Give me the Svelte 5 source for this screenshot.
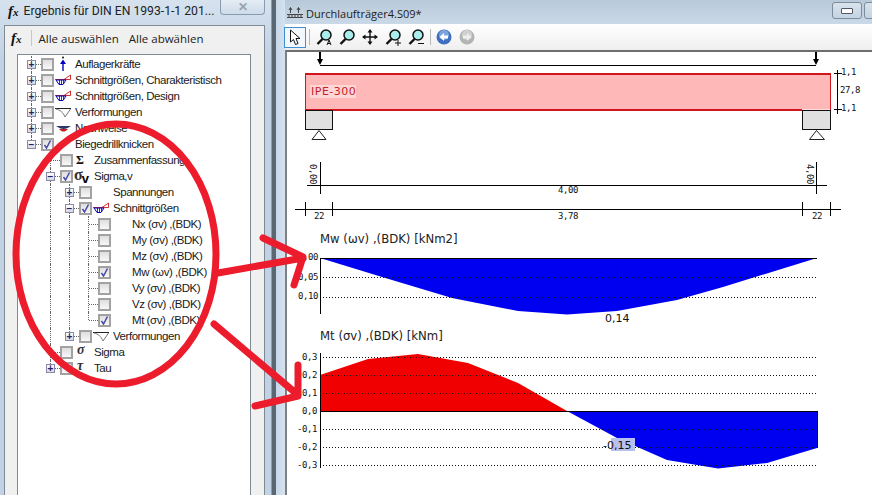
<script>
  const rows = [
    { level: 0, exp: '+', icon: 'force', text: 'Auflagerkräfte' },
    { level: 0, exp: '+', icon: 'moment', text: 'Schnittgrößen, Charakteristisch' },
    { level: 0, exp: '+', icon: 'moment', text: 'Schnittgrößen, Design' },
    { level: 0, exp: '+', icon: 'defl', text: 'Verformungen' },
    { level: 0, exp: '+', icon: 'bowl', text: 'Nachweise' },
    { level: 0, exp: '-', check: true, text: 'Biegedrillknicken' },
    { level: 1, icon: 'sum', text: 'Zusammenfassung' },
    { level: 1, exp: '-', check: true, icon: 'sigmav', text: 'Sigma,v' },
    { level: 2, exp: '+', text: 'Spannungen' },
    { level: 2, exp: '-', check: true, icon: 'moment', text: 'Schnittgrößen' },
    { level: 3, text: 'Nx (σv) ,(BDK)' },
    { level: 3, text: 'My (σv) ,(BDK)' },
    { level: 3, text: 'Mz (σv) ,(BDK)' },
    { level: 3, check: true, text: 'Mw (ωv) ,(BDK)' },
    { level: 3, text: 'Vy (σv) ,(BDK)' },
    { level: 3, text: 'Vz (σv) ,(BDK)' },
    { level: 3, check: true, text: 'Mt (σv) ,(BDK)' },
    { level: 2, exp: '+', icon: 'defl', text: 'Verformungen' },
    { level: 1, icon: 'sigma', text: 'Sigma' },
    { level: 1, exp: '+', icon: 'tau', text: 'Tau' }
  ];

  // true when a later sibling at this level still follows row i
  function continues(i, level) {
    for (let k = i + 1; k < rows.length; k++) {
      if (rows[k].level < level) return false;
      if (rows[k].level === level) return true;
    }
    return false;
  }

  const tools = ['zoomA', 'zoom', 'pan', 'zoomPlus', 'zoomMinus'];
  const mwGrid = [277, 297];
  const mtGrid = [357, 375, 393, 429, 447, 465];
  const mtLabels = [
    [360, '0,3'], [378, '0,2'], [396, '0,1'], [414, '0,0'],
    [432, '-0,1'], [450, '-0,2'], [468, '-0,3']
  ];
</script>

{#snippet magnifier(sign)}
  <svg class="tool" viewBox="0 0 16 18" width="16" height="18">
    <circle cx="10" cy="7" r="5" fill="#a8ecec" stroke="#111" stroke-width="1.5" />
    <path d="M6.5 11 L1.5 16" stroke="#111" stroke-width="2.4" />
    {#if sign === 'A'}<path d="M11 17 L13 12 L15 17 M12 15.5 H14" fill="none" stroke="#111" />{/if}
    {#if sign === '+'}<path d="M10 15 H16 M13 12 V18" stroke="#111" />{/if}
    {#if sign === '-'}<path d="M10 15.5 H16" stroke="#111" />{/if}
  </svg>
{/snippet}

{#snippet treeIcon(name)}
  {#if name === 'force'}
    <svg viewBox="0 0 17 16" width="17" height="16"><circle cx="8" cy="1.5" r="1" fill="#111" /><path d="M8 15 V5" stroke="#0000c8" stroke-width="1.4" /><path d="M5 8 L8 3.5 L11 8 Z" fill="#0000c8" /></svg>
  {:else if name === 'moment'}
    <svg viewBox="0 0 17 16" width="17" height="16"><path d="M0 7.500 H9 L15.500 3 V7.500 H9" fill="none" stroke="#d03030" /><path d="M1 8 H11 L8 12.500 H4 Z" fill="#fff" stroke="#0000b4" /><path d="M4.500 8 V12 M6.500 8 V12 M8.500 8 V12" stroke="#0000b4" stroke-width=".8" /></svg>
  {:else if name === 'defl'}
    <svg viewBox="0 0 17 16" width="17" height="16"><path d="M0 4.500 H16" stroke="#222" /><path d="M1 5 C5 6 8 8 10 13 L15.500 5" fill="none" stroke="#777" /></svg>
  {:else if name === 'bowl'}
    <svg viewBox="0 0 17 16" width="17" height="16"><path d="M1 6 H16 C13 8 11 9 8.500 9 C6 9 4 8 1 6 Z" fill="#2a3a68" /><path d="M4 9 H13 C11 11 10 11.500 8.500 11.500 C7 11.500 6 11 4 9 Z" fill="#c02020" /></svg>
  {:else if name === 'sum'}
    <span class="glyph sum">Σ</span>
  {:else if name === 'sigmav'}
    <span class="glyph sigv">σ<i>v</i></span>
  {:else if name === 'sigma'}
    <span class="glyph sig">σ</span>
  {:else if name === 'tau'}
    <span class="glyph sig">τ</span>
  {/if}
{/snippet}

<div class="desktop">
  <section class="dialog">
    <header class="dialog-title">
      <span class="fx">f<small>x</small></span>
      <span class="caption big">Ergebnis für DIN EN 1993-1-1 201...</span>
      <span class="close">✕</span>
    </header>
    <div class="panel">
      <div class="panel-tools">
        <span class="fx">f<small>x</small></span>
        <span class="sep"></span>
        <span>Alle auswählen</span>
        <span>Alle abwählen</span>
      </div>
      <ul class="tree">
        {#each rows as row, i}
          <li class="row">
            {#each Array(row.level) as _, col}
              <span class="cell" class:line={continues(i, col)}></span>
            {/each}
            <span class="cell conn" class:down={continues(i, row.level)}>
              {#if row.exp}<span class="exp">{row.exp === '+' ? '+' : '−'}</span>{/if}
            </span>
            <span class="cb">
              {#if row.check}
                <svg viewBox="0 0 9 9" width="9" height="9"><path d="M1.500 5 L3.500 8 L7.500 .5" fill="none" stroke="#4848a8" stroke-width="1.500" /></svg>
              {/if}
            </span>
            <span class="ic">{#if row.icon}{@render treeIcon(row.icon)}{/if}</span>
            <span class="label">{row.text}</span>
          </li>
        {/each}
      </ul>
    </div>
  </section>

  <section class="main">
    <div class="edge"></div>
    <div class="doc">
      <header class="doc-title">
        <svg viewBox="0 0 16 12" width="16" height="12">
          <path d="M0 7.500 H16 M0 10.500 H16 M2 7 V11 M5 7 V11 M8 7 V11 M11 7 V11 M14 7 V11 M3.500 6 V1 M11.500 6 V1" stroke="#444" fill="none" />
          <path d="M2 3 L3.500 .5 L5 3 M10 3 L11.500 .5 L13 3" stroke="#444" fill="none" />
        </svg>
        <span class="caption">Durchlaufträger4.S09*</span>
        <span class="winbtn"><i></i></span>
        <span class="winbtn next"></span>
      </header>
      <nav class="toolbar">
        <span class="pick">
          <svg viewBox="0 0 12 17" width="12" height="17"><path d="M1.500 1 V13 L4.500 10.500 L6.500 15.500 L9 14.500 L7 9.500 L11 9.500 Z" fill="#fff" stroke="#111" /></svg>
        </span>
        <span class="tsep"></span>
        {#each tools as t}
          {#if t === 'pan'}
            <svg class="tool" viewBox="0 0 16 16" width="16" height="16"><path d="M8 1 V15 M1 8 H15" stroke="#111" stroke-width="1.400" /><path d="M8 0 L5.500 3.500 H10.500 Z M8 16 L5.500 12.500 H10.500 Z M0 8 L3.500 5.500 V10.500 Z M16 8 L12.500 5.500 V10.500 Z" fill="#111" /></svg>
          {:else}
            {@render magnifier(t === 'zoomA' ? 'A' : t === 'zoomPlus' ? '+' : t === 'zoomMinus' ? '-' : '')}
          {/if}
        {/each}
        <span class="tsep second"></span>
        <svg class="nav" viewBox="0 0 16 16" width="16" height="16"><circle cx="8" cy="8" r="7.500" fill="#3f70c0" /><circle cx="8" cy="6" r="5" fill="#7fa6dc" /><path d="M3.500 8 L8 4 V6.500 H12 V9.500 H8 V12 Z" fill="#fff" /></svg>
        <svg class="nav" viewBox="0 0 16 16" width="16" height="16"><circle cx="8" cy="8" r="7.500" fill="#b4b4b4" /><circle cx="8" cy="6" r="5" fill="#d0d0d0" /><path d="M12.500 8 L8 4 V6.500 H4 V9.500 H8 V12 Z" fill="#eee" /></svg>
      </nav>
      <div class="canvas">
        <svg viewBox="287 52 585 443" width="585" height="443">
          <!-- loads -->
          <g class="ln">
            <path d="M320 65.500 H816" />
            <path d="M320 52 V62 M816 52 V62" stroke-width="2" />
          </g>
          <path d="M317 59 L320 65 L323 59 Z M813 59 L816 65 L819 59 Z" fill="#000" />

          <!-- beam -->
          <rect x="305.500" y="73.500" width="525" height="36" fill="#ffb8b8" />
          <path d="M305 73.500 H831 M305 110 H802" stroke="#d2141e" stroke-width="2" shape-rendering="crispEdges" />
          <path d="M305.500 73 V110 M830.500 73 V110" stroke="#d2141e" shape-rendering="crispEdges" />
          <rect x="305.500" y="110.500" width="27" height="19" fill="#e0e0e0" stroke="#111" shape-rendering="crispEdges" />
          <rect x="802.500" y="110.500" width="28" height="19" fill="#e0e0e0" stroke="#111" shape-rendering="crispEdges" />
          <path d="M319 130.500 L312 139.500 H326 Z M816.500 130.500 L809.500 139.500 H824.500 Z" fill="#fff" stroke="#222" />
          <rect x="310" y="85" width="46" height="13" fill="#ffd6d6" />
          <text class="red" x="311" y="95">IPE-300</text>

          <!-- section dimensions -->
          <g class="ln">
            <path d="M837.500 70 V114 M834 73.500 H842 M834 109.500 H842" />
          </g>
          <text class="dim" x="841" y="75">1,1</text>
          <text class="dim" x="840" y="93">27,8</text>
          <text class="dim" x="841" y="111">1,1</text>

          <!-- length dimensions -->
          <g class="ln">
            <path d="M307 185.500 H827 M320.500 162 V194 M816.500 162 V194" />
            <path d="M295 209.500 H841 M305.500 202 V216 M332.500 202 V216 M802.500 202 V216 M830.500 202 V216" />
          </g>
          <text class="dim" transform="translate(310 164) rotate(90)">0,00</text>
          <text class="dim" transform="translate(807 164) rotate(90)">4,00</text>
          <text class="dim" x="558" y="193">4,00</text>
          <text class="dim" x="314" y="219">22</text>
          <text class="dim" x="558" y="219">3,78</text>
          <text class="dim" x="812" y="219">22</text>

          <!-- Mw chart -->
          <text class="head" x="320" y="243">Mw (ωv) ,(BDK) [kNm2]</text>
          <path d="M320 258 L382 277 L452 298 L518 311 L567 314.500 L617 311 L677 300 L723 287 L817 258 Z" fill="#0000f0" />
          {#each mwGrid as y}
            <path class="dot" d="M320 {y + .5} H817" />
          {/each}
          <path class="dot" d="M617.500 258 V311" />
          <path class="ln2" d="M320.500 258 V314 M320 258.500 H817" />
          <text class="dim end" x="318" y="260">0,00</text>
          <text class="dim end" x="318" y="280">0,05</text>
          <text class="dim end" x="318" y="299">0,10</text>
          <text class="val" x="605" y="322">0,14</text>

          <!-- Mt chart -->
          <text class="head" x="320" y="340">Mt (σv) ,(BDK) [kNm]</text>
          <path d="M320 375 L368 359 L418 354 L468 363 L518 383 L567 411 H320 Z" fill="#f00000" />
          <path d="M567 411 L617 438 L667 460 L718 468.500 L767 463 L817 448 V411 Z" fill="#0000f0" />
          {#each mtGrid as y}
            <path class="dot" d="M320 {y + .5} H817" />
          {/each}
          <path class="dot" d="M617.500 411 V438" />
          <path class="ln2" d="M320.500 353 V468 M320 411.500 H817 M817 411 V448" />
          {#each mtLabels as [y, t]}
            <text class="dim end" x="317" {y}>{t}</text>
          {/each}
          <rect x="611" y="438" width="24" height="13" fill="#b8c0f0" />
          <text class="val" x="603" y="449">-0,15</text>
        </svg>
      </div>
    </div>
  </section>

  <svg class="marks" viewBox="0 0 872 495" width="872" height="495">
    <g fill="none" stroke="#ec1c2c" stroke-width="7" stroke-linecap="round" stroke-linejoin="round">
      <ellipse cx="116" cy="254" rx="100" ry="130" />
      <path d="M218 273 L303 258 M263 238 L303 257 L294 285" />
      <path d="M214 324 L298 395 M298 365 L298 396 L255 406" />
    </g>
  </svg>
</div>

<style>
  :global(body) {
    margin: 0;
    background: #fff;
  }

  .desktop {
    position: relative;
    display: flex;
    width: 872px;
    height: 495px;
    overflow: hidden;
    background: #5a6672;
    font-family: "Liberation Sans", Arial, sans-serif;
    color: #1a1a1a;
  }

  .caption {
    font-family: "Open Sans", sans-serif;
    font-size: 11px;
    color: #222;
    white-space: nowrap;
  }

  .caption.big {
    font-family: Roboto, sans-serif;
    font-size: 12.200px;
    flex: none;
    margin-left: 1px;
  }

  .fx {
    font-family: "Liberation Serif", serif;
    font-style: italic;
    font-weight: 700;
    font-size: 15px;
    color: #111;
  }

  .fx small {
    font-size: 11px;
  }

  .dialog {
    display: flex;
    flex-direction: column;
    width: 272px;
    flex: none;
    box-sizing: border-box;
    padding: 0 6px 0 4px;
    background: linear-gradient(#d6e2ee, #c0d2e4 60px);
    border-right: 1px solid #8d9cab;
  }

  .dialog-title {
    display: flex;
    align-items: flex-start;
    gap: 4px;
    height: 25px;
    padding-left: 4px;
    line-height: 22px;
  }

  .close {
    flex: none;
    margin-left: auto;
    width: 45px;
    height: 15px;
    box-sizing: border-box;
    border: 1px solid #8a9bb0;
    border-top: none;
    border-radius: 0 0 4px 4px;
    background: linear-gradient(#e4ecf4, #cddbe9);
    color: #95a2b0;
    font-size: 12px;
    font-weight: 700;
    line-height: 14px;
    text-align: center;
  }

  .panel {
    flex: 1;
    display: flex;
    flex-direction: column;
    border: 1px solid #7f8a94;
    border-bottom: none;
    background: #f0f0f0;
  }

  .panel-tools {
    display: flex;
    align-items: center;
    gap: 10px;
    height: 28px;
    box-sizing: border-box;
    padding: 0 0 4px 6px;
    font-family: "Open Sans", sans-serif;
    font-size: 11.500px;
    color: #222;
  }

  .sep {
    width: 1px;
    height: 16px;
    margin: 0 -3px 0 -1px;
    background: #c8c8c8;
  }

  .tree {
    flex: 1;
    margin: 0 13px 0 12px;
    padding: 1px 0 0 4px;
    list-style: none;
    background: #fff;
    border: 1px solid #7f8a94;
    border-bottom: none;
  }

  .row {
    display: flex;
    align-items: center;
    height: 16px;
    font-size: 11.500px;
    letter-spacing: -0.45px;
  }

  .cell {
    position: relative;
    flex: none;
    width: 19px;
    height: 16px;
  }

  .cell.line::before,
  .conn::before {
    content: "";
    position: absolute;
    left: 9px;
    top: 0;
    height: 16px;
    border-left: 1px dotted #666;
  }

  .conn::before {
    height: 8px;
  }

  .conn.down::before {
    height: 16px;
  }

  .conn::after {
    content: "";
    position: absolute;
    left: 10px;
    top: 8px;
    width: 9px;
    border-top: 1px dotted #666;
  }

  .exp {
    position: absolute;
    z-index: 1;
    left: 5px;
    top: 4px;
    width: 9px;
    height: 9px;
    box-sizing: border-box;
    border: 1px solid #8a8aa8;
    background: linear-gradient(#fff, #d8d8e6);
    color: #22226a;
    font-size: 10px;
    font-weight: 700;
    line-height: 7px;
    text-align: center;
    letter-spacing: 0;
  }

  .cb {
    display: flex;
    align-items: center;
    justify-content: center;
    flex: none;
    width: 13px;
    height: 13px;
    box-sizing: border-box;
    border: 2px solid #a2a2a2;
    background: linear-gradient(#dedede, #f8f8f8);
  }

  .ic {
    display: flex;
    align-items: center;
    flex: none;
    width: 21px;
    height: 16px;
    padding-left: 1px;
    box-sizing: border-box;
  }

  .label {
    white-space: nowrap;
  }

  .glyph {
    font-family: "Liberation Serif", serif;
    font-weight: 700;
    color: #111;
  }

  .sum {
    margin-left: 2px;
    font-size: 12px;
  }

  .sig {
    margin: -5px 0 0 3px;
    font-size: 14px;
    font-style: italic;
    color: #333;
  }

  .sigv {
    margin-top: -3px;
    font-size: 16px;
    letter-spacing: -1px;
    color: #333;
  }

  .sigv i {
    position: relative;
    top: 3px;
    font-style: normal;
    font-family: "Liberation Sans", sans-serif;
    font-size: 13px;
    color: #000;
  }

  .main {
    flex: 1;
    display: flex;
    margin-left: 4px;
    min-width: 0;
  }

  .edge {
    flex: none;
    width: 9px;
    background: linear-gradient(90deg, #c8d8e8, #d4e2f0);
  }

  .doc {
    flex: 1;
    display: flex;
    flex-direction: column;
    min-width: 0;
    background: #fff;
  }

  .doc-title {
    display: flex;
    align-items: center;
    gap: 3px;
    height: 24px;
    box-sizing: border-box;
    padding: 2px 0 0 2px;
    background: linear-gradient(#b8c9d9, #cad9e7);
    overflow: hidden;
  }

  .winbtn {
    display: flex;
    align-items: center;
    justify-content: center;
    flex: none;
    width: 30px;
    height: 17px;
    margin-top: -5px;
    box-sizing: border-box;
    border: 1px solid #7d8c9c;
    border-radius: 3px;
    background: linear-gradient(#d8e3ed, #c4d3e1);
  }

  .doc-title .caption {
    margin-right: auto;
  }

  .winbtn i {
    width: 10px;
    height: 4px;
    border: 1px solid #556;
    border-radius: 1px;
    background: #fff;
  }

  .next {
    margin-left: -1px;
    margin-right: -22px;
  }

  .toolbar {
    display: flex;
    align-items: center;
    gap: 7px;
    height: 26px;
    background: linear-gradient(#fff, #efefef);
  }

  .tool {
    flex: none;
  }

  .pick {
    display: flex;
    align-items: center;
    justify-content: center;
    width: 22px;
    height: 21px;
    box-sizing: border-box;
    border: 1px solid #3f8fd2;
    background: #f2f8fd;
    margin-left: -1px;
  }

  .tsep {
    width: 1px;
    height: 16px;
    margin: 0 -1px 0 -4px;
    background: #b8b8b8;
  }

  .tsep.second {
    margin: 0 -2px 0 -1px;
  }

  .nav {
    flex: none;
  }

  .canvas {
    flex: 1;
    display: flex;
    align-items: flex-start;
    border-top: 2px solid #6e6e6e;
    border-left: 2px solid #808080;
    background: #fff;
    min-height: 0;
  }

  .canvas svg {
    display: block;
  }

  .ln path,
  .ln2 {
    fill: none;
    stroke: #000;
    shape-rendering: crispEdges;
  }

  .dot {
    fill: none;
    stroke: #111;
    stroke-dasharray: 1 2;
    shape-rendering: crispEdges;
  }

  text {
    font-family: "DejaVu Sans", sans-serif;
    fill: #111;
  }

  .dim {
    font-family: "DejaVu Sans Mono", monospace;
    font-size: 9px;
    letter-spacing: -0.4px;
  }

  .end {
    text-anchor: end;
  }

  .red {
    font-size: 11px;
    letter-spacing: .5px;
    fill: #c81e28;
  }

  .head {
    font-size: 11.700px;
    fill: #222;
  }

  .val {
    font-size: 11px;
  }

  .marks {
    position: absolute;
    left: 0;
    top: 0;
    pointer-events: none;
  }
</style>
